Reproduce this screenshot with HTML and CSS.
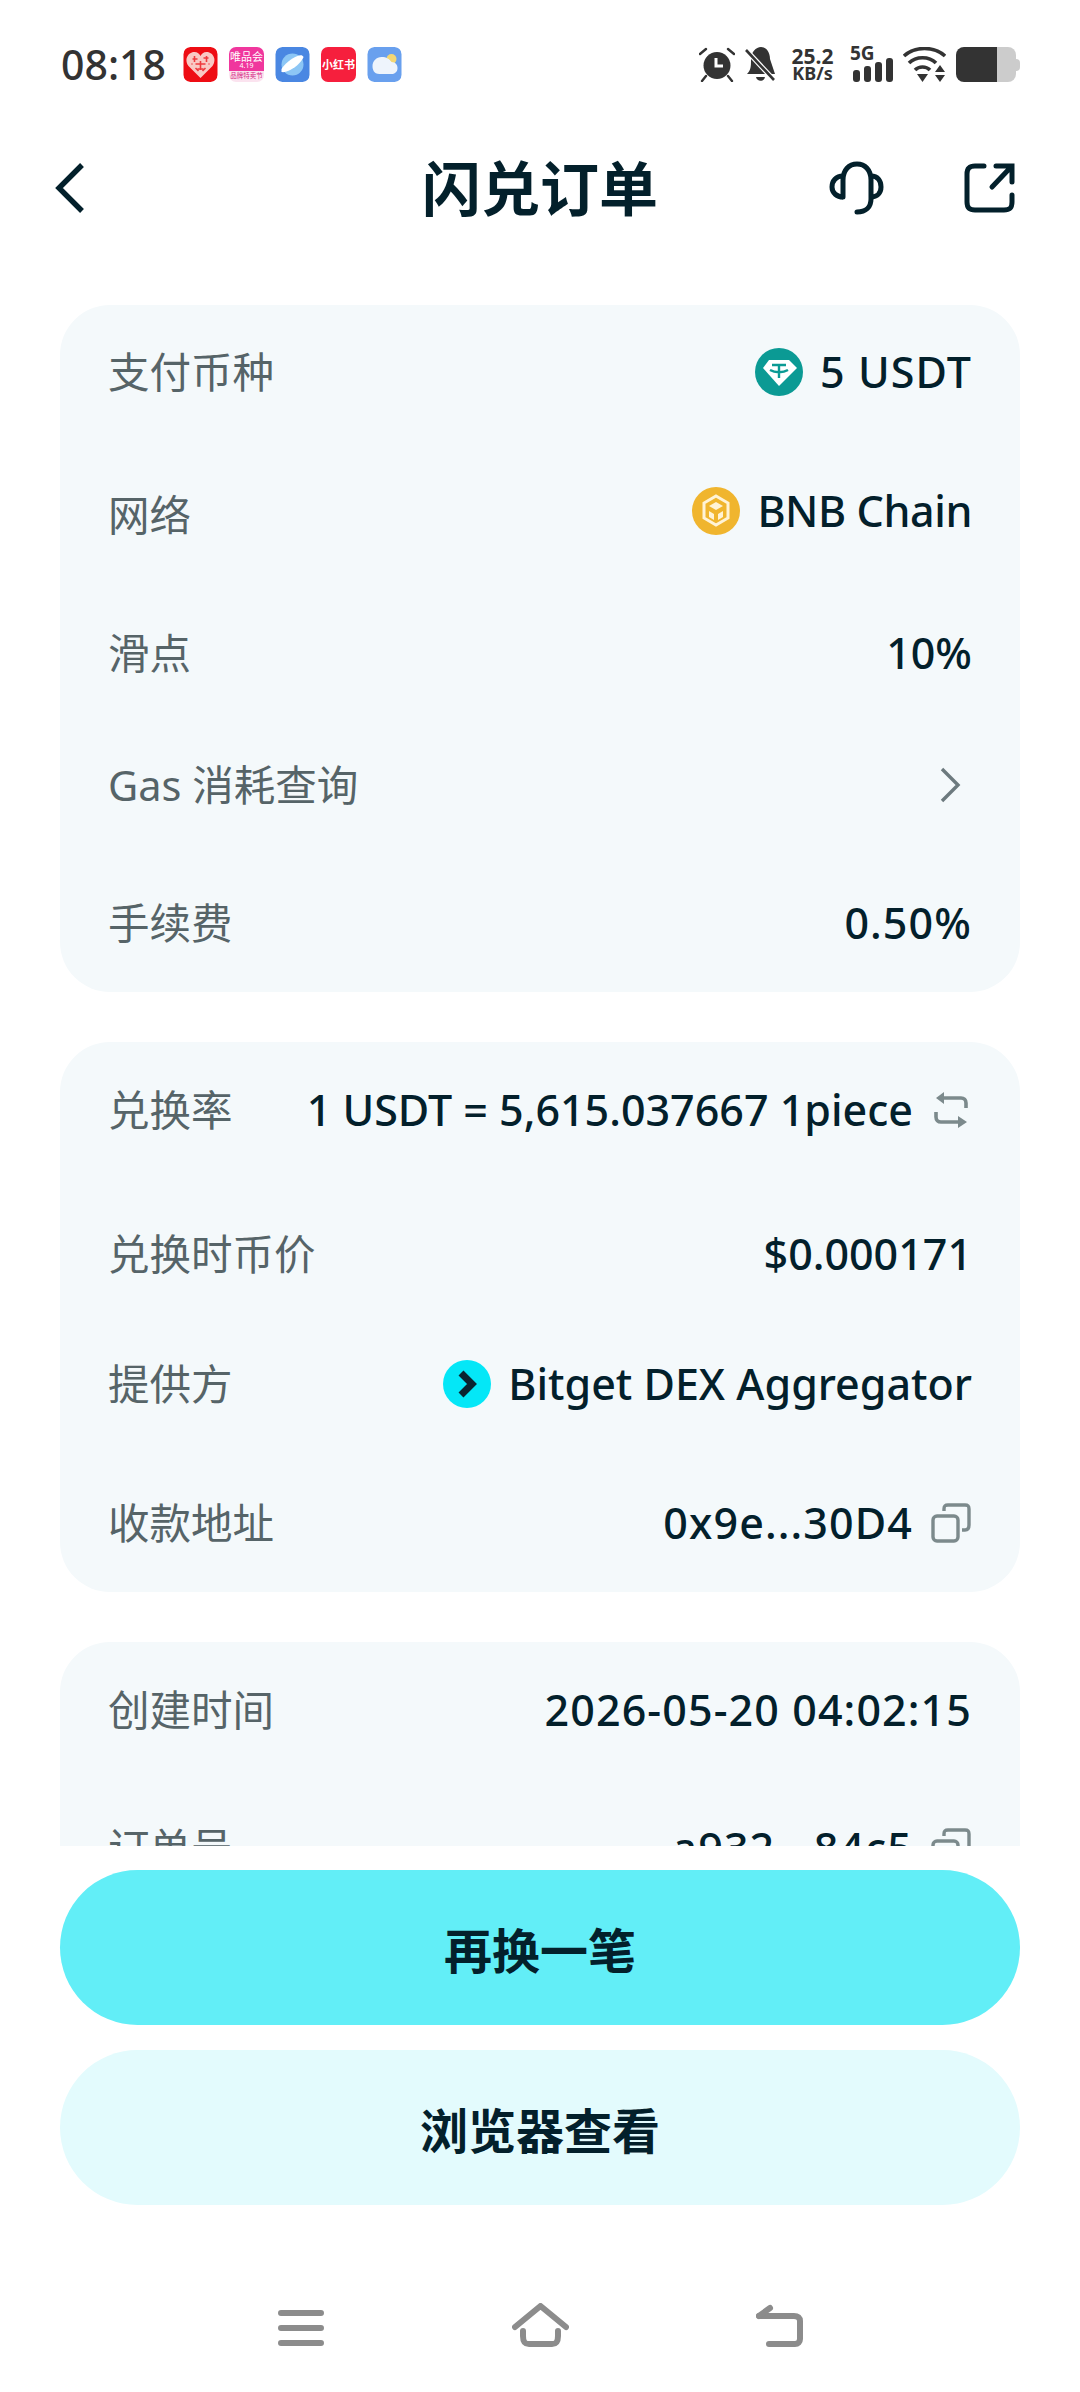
FILE: index.html
```html
<!DOCTYPE html>
<html lang="zh-CN">
<head>
    <meta charset="UTF-8">
    <meta name="viewport" content="width=device-width, initial-scale=1.0">
    <title>闪兑订单</title>
    <link rel="stylesheet" href="styles.css">
</head>
<body>
    <div class="status-bar">
        <span class="status-time">08:18</span>
        <div class="app-icons">
            <svg class="app-icon" viewBox="0 0 34 35"><rect width="34" height="35" rx="7" fill="#ee0d14"/><path d="M17 31 L5 19 C0 12 5 5 11 5 C14 5 16 7 17 9 C18 7 20 5 23 5 C29 5 34 12 29 19 Z" fill="#f9c9c4"/><path d="M9 12h5M20 11h5M12 17h10M8 17h1M25 17h1M14 22h6M11 9v6M23 9v6M17 14v9M12 21l3 3M22 21l-3 3" stroke="#ee3a3e" stroke-width="1.6" fill="none"/></svg>
            <div class="app-icon vip-icon"><span class="vip-top">唯品会</span><span class="vip-mid">4.19</span><span class="vip-low">品牌特卖节</span></div>
            <svg class="app-icon" viewBox="0 0 34 35"><rect width="34" height="35" rx="7" fill="#4a87e2"/><circle cx="17" cy="17.5" r="11" fill="#8cc6f5"/><path d="M6 25 C10 26 18 22 23 17 C26 14 28 11 28 10 C27 8 25 8 22 9 C16 11 9 17 6 22 Z" fill="#fff"/></svg>
            <div class="app-icon red-icon">小红书</div>
            <svg class="app-icon" viewBox="0 0 34 35"><rect width="34" height="35" rx="7" fill="#69a0ee"/><circle cx="24" cy="12" r="5" fill="#f3d774"/><path d="M12 27 C6 27 5 22 5 19 C5 14 9 10 14 10 C19 10 22 12 24 15 C28 15 30 18 30 21 C30 25 27 27 24 27 Z" fill="#eef4fc"/></svg>
        </div>
        <div class="status-right">
            <svg class="icon-alarm" viewBox="0 0 36 35"><circle cx="18" cy="18.5" r="13.5" fill="#333"/><path d="M17 11v8h7" stroke="#fff" stroke-width="3" fill="none"/><path d="M1 7 L7 2 M35 7 L29 2 M7 29 L3 34 M29 29 L33 34" stroke="#333" stroke-width="2.4" stroke-linecap="round"/></svg>
            <svg class="icon-bell" viewBox="0 0 31 35"><path d="M2 27 C6 23 6 19 6 13 C6 5 11 0 16 0 C21 0 25 5 25 12 L30 27 Z" fill="#333"/><path d="M11 30 H20 C19 35 12 35 11 30 Z" fill="#333"/><path d="M1 3 L29 33" stroke="#fff" stroke-width="5"/><path d="M1 3 L29 33" stroke="#333" stroke-width="2.6"/></svg>
            <div class="net-speed"><span class="net-rate">25.2</span><span class="net-unit">KB/s</span></div>
            <div class="signal">
                <span class="signal-label">5G</span>
                <svg class="signal-bars" viewBox="0 0 40 24"><rect x="0" y="12" width="7" height="12" rx="3" fill="#333"/><rect x="11" y="8" width="7" height="16" rx="3" fill="#333"/><rect x="22" y="4" width="7" height="20" rx="3" fill="#333"/><rect x="33" y="0" width="7" height="24" rx="3" fill="#333"/></svg>
            </div>
            <svg class="icon-wifi" viewBox="0 0 43 35"><path d="M1 9 C12 -1 31 -1 42 9" stroke="#333" stroke-width="3.6" fill="none"/><path d="M6 16 C13 9 26 9 33 16" stroke="#333" stroke-width="3.6" fill="none"/><path d="M12 23 C16 19 23 19 27 23" stroke="#333" stroke-width="3.6" fill="none"/><path d="M14 27 H25 L19.5 35 Z M37 18 L42 25 H32 Z M32 28 H42 L37 35 Z" fill="#333"/></svg>
            <div class="battery"><div class="battery-fill"></div><div class="battery-cap"></div></div>
        </div>
    </div>

    <div class="top-nav">
        <svg class="nav-back" viewBox="0 0 30 52"><path d="M27 3 L4 26 L27 49" stroke="#03202b" stroke-width="5.4" fill="none"/></svg>
        <h1 class="nav-title">闪兑订单</h1>
        <div class="nav-actions">
            <svg class="nav-headset" viewBox="0 0 55 54"><path d="M14 36 C14 30 14 20 14 19 C14 9 20 3 28 3 C36 3 42 9 42 19 V38 C42 46 37 51 28 51" stroke="#03202b" stroke-width="5" stroke-linecap="round" fill="none"/><path d="M14 15 C7 15 3 20 3 26 C3 32 8 36 14 36 M42 15 C49 15 52 20 52 26 C52 32 48 36 42 36" stroke="#03202b" stroke-width="5" fill="none"/></svg>
            <svg class="nav-share" viewBox="0 0 51 50"><path d="M20 3 H11 C5 3 3 6 3 11 V39 C3 45 6 47 11 47 H40 C46 47 48 45 48 39 V32" stroke="#03202b" stroke-width="5" stroke-linecap="round" fill="none"/><path d="M28 24 L47 4 M32 3 H48 V19" stroke="#03202b" stroke-width="5" stroke-linecap="round" fill="none"/></svg>
        </div>
    </div>

    <div class="scroll-area">
        <div class="card card-pay">
            <div class="row row-a">
                <span class="row-label">支付币种</span>
                <span class="row-value wide">
                    <svg class="coin" viewBox="0 0 48 48"><circle cx="24" cy="24" r="24" fill="#0b9a94"/><path d="M14 12 H34 L42 20 L24 38 L8 20 Z" fill="#fff"/><path d="M17 17 H31 M24 17 V30 M15 22 C20 25 28 25 33 22" stroke="#0b9a94" stroke-width="2.4" fill="none"/></svg>
                    5 USDT
                </span>
            </div>
            <div class="row row-b">
                <span class="row-label label-low">网络</span>
                <span class="row-value tight">
                    <svg class="coin" viewBox="0 0 48 48"><circle cx="24" cy="24" r="24" fill="#f0b52e"/><path d="M24 9 L36 16 V31 L24 38 L12 31 V16 Z" stroke="#fff3d6" stroke-width="3" fill="none"/><path d="M24 15 L31 19 L24 23 L17 19 Z M17 24 L22 27 V33 L17 30 Z M31 24 L26 27 V33 L31 30 Z" fill="#fff3d6"/></svg>
                    BNB Chain
                </span>
            </div>
            <div class="row row-c">
                <span class="row-label">滑点</span>
                <span class="row-value">10%</span>
            </div>
            <div class="row row-d">
                <span class="row-label">Gas 消耗查询</span>
                <svg class="row-chevron" viewBox="0 0 24 38"><path d="M4 3 L20 19 L4 35" stroke="#6c7a7e" stroke-width="3.4" fill="none"/></svg>
            </div>
            <div class="row row-e">
                <span class="row-label">手续费</span>
                <span class="row-value wide">0.50%</span>
            </div>
        </div>

        <div class="card card-rate">
            <div class="row row-f">
                <span class="row-label">兑换率</span>
                <span class="row-value">
                    1 USDT = 5,615.037667 1piece
                    <svg class="row-swap" viewBox="0 0 36 36"><path d="M33 16 V11 C33 8 31 6 28 6 H7 M3 20 V25 C3 28 5 30 8 30 H29" stroke="#7c8a8c" stroke-width="3.6" fill="none"/><path d="M11 0 V12 L3 6 Z M25 24 V36 L34 30 Z" fill="#7c8a8c"/></svg>
                </span>
            </div>
            <div class="row row-g">
                <span class="row-label">兑换时币价</span>
                <span class="row-value">$0.000171</span>
            </div>
            <div class="row row-h">
                <span class="row-label">提供方</span>
                <span class="row-value">
                    <svg class="coin" viewBox="0 0 48 48"><circle cx="24" cy="24" r="24" fill="#04e7f7"/><path d="M18 13 L29 24 L18 35" stroke="#0a2430" stroke-width="7" fill="none"/></svg>
                    Bitget DEX Aggregator
                </span>
            </div>
            <div class="row row-i">
                <span class="row-label">收款地址</span>
                <span class="row-value wide">
                    0x9e...30D4
                    <svg class="row-tool" viewBox="0 0 40 40"><rect x="2" y="13" width="25" height="25" rx="4" stroke="#7c8a8c" stroke-width="3.4" fill="none"/><path d="M13 8 V6 C13 3 14 2 17 2 H34 C37 2 38 3 38 6 V22 C38 25 37 27 34 27 H31" stroke="#7c8a8c" stroke-width="3.4" fill="none"/></svg>
                </span>
            </div>
        </div>

        <div class="card card-time">
            <div class="row row-j">
                <span class="row-label">创建时间</span>
                <span class="row-value wide">2026-05-20 04:02:15</span>
            </div>
            <div class="row row-k">
                <span class="row-label">订单号</span>
                <span class="row-value wide">
                    a932...84c5
                    <svg class="row-tool" viewBox="0 0 40 40"><rect x="2" y="13" width="25" height="25" rx="4" stroke="#7c8a8c" stroke-width="3.4" fill="none"/><path d="M13 8 V6 C13 3 14 2 17 2 H34 C37 2 38 3 38 6 V22 C38 25 37 27 34 27 H31" stroke="#7c8a8c" stroke-width="3.4" fill="none"/></svg>
                </span>
            </div>
        </div>
    </div>

    <div class="actions">
        <button class="btn btn-primary">再换一笔</button>
        <button class="btn btn-secondary">浏览器查看</button>
    </div>

    <div class="system-nav">
        <svg class="sys-menu" viewBox="0 0 46 36"><path d="M3 3 H43 M3 18 H43 M3 33 H43" stroke="#8c8c8c" stroke-width="6" stroke-linecap="round"/></svg>
        <svg class="sys-home" viewBox="0 0 57 44"><path d="M3 24 L28.5 3 L54 24" stroke="#8c8c8c" stroke-width="6" stroke-linecap="round" stroke-linejoin="round" fill="none"/><path d="M11 28 V33 C11 39 13 41 17 41 H40 C44 41 46 39 46 33 V28" stroke="#8c8c8c" stroke-width="6" stroke-linecap="round" fill="none"/></svg>
        <svg class="sys-back" viewBox="0 0 47 44"><path d="M3 13 H38 C42 13 44 15 44 18 V36 C44 39 42 41 39 41 H13" stroke="#8c8c8c" stroke-width="6" stroke-linecap="round" fill="none"/><path d="M3 13 L14 5" stroke="#8c8c8c" stroke-width="6" stroke-linecap="round"/></svg>
    </div>
</body>
</html>
```

FILE: styles.css
```css
* {
    box-sizing: border-box;
}

body {
    display: flex;
    flex-direction: column;
    height: 2392px;
    margin: 0;
    overflow: hidden;
    background: #fff;
    color: #03202b;
    font-family: "Noto Sans", "Noto Sans CJK SC", sans-serif;
}

/* Status bar */
.status-bar {
    display: flex;
    align-items: center;
    height: 35px;
    margin-top: 47px;
    padding: 0 60px 0 61px;
    color: #333;
}

.status-time {
    width: 122px;
    font-size: 41px;
    font-weight: 500;
    line-height: 35px;
}

.app-icons {
    display: flex;
    gap: 11px;
}

.app-icon {
    display: block;
    width: 35px;
    height: 35px;
    border-radius: 7px;
    overflow: hidden;
}

.vip-icon {
    display: flex;
    flex-direction: column;
    align-items: center;
    background: linear-gradient(#f0379d 70%, #fbe3ef 70%);
    color: #fff;
    line-height: 1;
    white-space: nowrap;
}

.vip-top {
    margin-top: 4px;
    font-size: 11px;
}

.vip-mid {
    font-size: 7px;
}

.vip-low {
    margin-top: 4px;
    color: #d62a85;
    font-size: 6.5px;
}

.red-icon {
    background: #f61f3d;
    color: #fff;
    font-size: 11px;
    font-weight: 700;
    line-height: 35px;
    text-align: center;
    white-space: nowrap;
}

.status-right {
    display: flex;
    align-items: center;
    margin-left: auto;
}

.icon-alarm {
    width: 36px;
    height: 35px;
}

.icon-bell {
    width: 31px;
    height: 35px;
    margin-left: 10px;
}

.net-speed {
    display: flex;
    flex-direction: column;
    align-items: center;
    width: 45px;
    margin-left: 14px;
}

.net-rate {
    font-size: 21px;
    font-weight: 700;
    line-height: 18px;
}

.net-unit {
    font-size: 18px;
    font-weight: 700;
    line-height: 17px;
}

.signal {
    position: relative;
    width: 43px;
    height: 35px;
    margin-left: 15px;
}

.signal-label {
    position: absolute;
    top: -4px;
    left: 0;
    font-size: 19px;
    font-weight: 700;
    line-height: 20px;
}

.signal-bars {
    position: absolute;
    right: 0;
    bottom: 0;
    width: 40px;
    height: 24px;
}

.icon-wifi {
    width: 43px;
    height: 35px;
    margin-left: 10px;
}

.battery {
    position: relative;
    width: 64px;
    height: 35px;
    margin-left: 10px;
}

.battery-fill {
    width: 60px;
    height: 35px;
    border-radius: 8px;
    background: linear-gradient(90deg, #333 68%, #ccc 68%);
}

.battery-cap {
    position: absolute;
    top: 12px;
    right: 0;
    width: 5px;
    height: 12px;
    border-radius: 0 4px 4px 0;
    background: #ccc;
}

/* Top navigation */
.top-nav {
    position: relative;
    display: flex;
    align-items: center;
    justify-content: space-between;
    height: 56px;
    margin-top: 78px;
    padding: 0 65px 0 55px;
}

.nav-back {
    width: 30px;
    height: 52px;
}

.nav-title {
    position: absolute;
    left: 0;
    right: 0;
    margin: 0;
    font-size: 59px;
    font-weight: 600;
    line-height: 56px;
    text-align: center;
}

.nav-actions {
    display: flex;
    align-items: center;
    gap: 80px;
}

.nav-headset {
    width: 55px;
    height: 54px;
}

.nav-share {
    width: 51px;
    height: 50px;
}

/* Scrolling cards */
.scroll-area {
    display: flex;
    flex-direction: column;
    flex: 1;
    gap: 50px;
    min-height: 0;
    margin-top: 89px;
    padding: 0 60px;
    overflow: hidden;
}

.card {
    flex-shrink: 0;
    display: flex;
    flex-direction: column;
    padding: 0 48px;
    border-radius: 50px;
    background: #f4f9fb;
}

.card-pay {
    height: 687px;
}

.card-rate {
    height: 550px;
}

.card-time {
    height: 300px;
}

.row {
    display: flex;
    align-items: center;
    justify-content: space-between;
    flex-shrink: 0;
    white-space: nowrap;
}

.row-a { height: 134px; }
.row-b { height: 144px; }
.row-c { height: 140px; }
.row-d { height: 124px; }
.row-e { height: 139px; margin-top: 6px; }
.row-f { height: 136px; }
.row-g { height: 152px; }
.row-h { height: 108px; }
.row-i { height: 138px; margin-top: 16px; }
.row-j { height: 136px; }
.row-k { height: 140px; }

.row-label {
    color: #566468;
    font-size: 41.5px;
    line-height: 56px;
}

.label-low {
    position: relative;
    top: 4px;
}

.row-value {
    display: flex;
    align-items: center;
    font-size: 43px;
    font-weight: 550;
    line-height: 56px;
}

.wide {
    letter-spacing: 1.1px;
}

.tight {
    letter-spacing: -0.4px;
}

.coin {
    width: 48px;
    height: 48px;
    margin-right: 17px;
}

.row-swap {
    width: 36px;
    height: 36px;
    margin-left: 20px;
    margin-right: 3px;
}

.row-tool {
    width: 40px;
    height: 40px;
    margin-left: 18px;
    margin-right: 1px;
}

.row-chevron {
    width: 24px;
    height: 38px;
    margin-right: 10px;
}

/* Bottom buttons */
.actions {
    display: flex;
    flex-direction: column;
    gap: 25px;
    padding: 24px 60px 0;
}

.btn {
    height: 155px;
    border: none;
    border-radius: 78px;
    color: #03202b;
    font-family: inherit;
    font-size: 48px;
    font-weight: 600;
}

.btn-primary {
    background: #62eef7;
}

.btn-secondary {
    background: #e3fbfd;
}

/* System navigation */
.system-nav {
    display: flex;
    align-items: flex-start;
    height: 187px;
    padding: 98px 0 0 278px;
}

.sys-menu {
    width: 46px;
    height: 36px;
    margin-top: 7px;
}

.sys-home {
    width: 57px;
    height: 44px;
    margin-left: 188px;
}

.sys-back {
    width: 47px;
    height: 44px;
    margin-left: 187px;
}
```
